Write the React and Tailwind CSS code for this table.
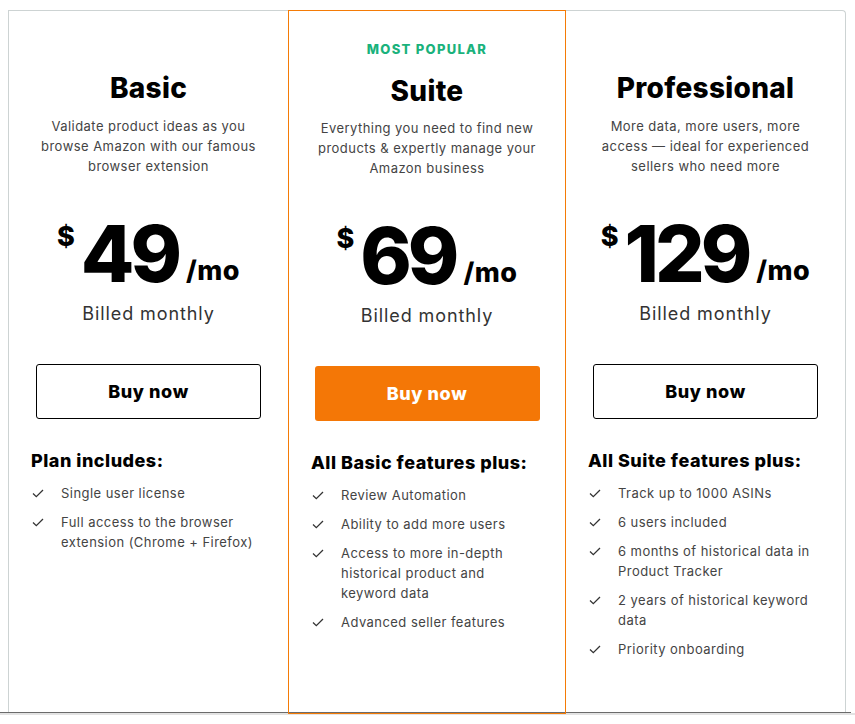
import React from 'react';

const plans = [
  {
    name: 'Basic',
    desc: ['Validate product ideas as you', 'browse Amazon with our famous', 'browser extension'],
    price: '49',
    heading: 'Plan includes:',
    features: ['Single user license', 'Full access to the browser extension (Chrome + Firefox)'],
  },
  {
    name: 'Suite',
    popular: true,
    desc: ['Everything you need to find new', 'products & expertly manage your', 'Amazon business'],
    price: '69',
    heading: 'All Basic features plus:',
    features: [
      'Review Automation',
      'Ability to add more users',
      'Access to more in-depth historical product and keyword data',
      'Advanced seller features',
    ],
  },
  {
    name: 'Professional',
    desc: ['More data, more users, more', 'access — ideal for experienced', 'sellers who need more'],
    price: '129',
    heading: 'All Suite features plus:',
    features: [
      'Track up to 1000 ASINs',
      '6 users included',
      '6 months of historical data in Product Tracker',
      '2 years of historical keyword data',
      'Priority onboarding',
    ],
  },
];

const Check = () => (
  <svg width="12" height="9" viewBox="0 0 12 9" className="mt-[6px] shrink-0" fill="none">
    <path d="M1 4.5 L4.3 7.6 L11 1" stroke="#333" strokeWidth="1.3" />
  </svg>
);

const PlanColumn = ({ plan }) => {
  const featured = plan.popular;
  return (
    <div
      className={
        featured
          ? 'w-[278px] h-[704px] border border-[#f47b06] flex flex-col items-center pt-[30px]'
          : 'w-[279px] h-[702px] flex flex-col items-center pt-[61px]'
      }
    >
      {featured && (
        <div className="text-[13px] leading-4 font-extrabold tracking-[1.3px] text-[#1ab27c] mb-[18px]">
          MOST POPULAR
        </div>
      )}
      <h2 className="text-[28px] leading-8 font-extrabold tracking-[0.3px] text-black">{plan.name}</h2>

      <p className={`text-[13px] leading-5 tracking-[0.45px] text-[#444] text-center ${featured ? 'mt-[11px]' : 'mt-[12px]'}`}>
        {plan.desc.map((line) => (
          <span key={line} className="block">{line}</span>
        ))}
      </p>

      <div className="flex mt-[38px] h-[80px]">
        <span className="text-[27px] leading-none font-extrabold text-black mt-[9px] mr-[6px]">$</span>
        <span className="text-[78px] leading-[80px] font-extrabold tracking-[-4px] text-black">{plan.price}</span>
        <span className="text-[27px] leading-none font-extrabold tracking-[0.5px] text-black self-end mb-[10px] ml-[8px]">/mo</span>
      </div>

      <div className="mt-[8px] text-[18px] leading-6 tracking-[0.9px] text-[#333]">Billed monthly</div>

      <button
        className={
          featured
            ? 'mt-[38px] w-[225px] h-[55px] rounded-[3px] bg-[#f47706] text-white text-[18px] tracking-[0.6px] font-extrabold'
            : 'mt-[38px] w-[225px] h-[55px] rounded-[3px] border border-black bg-white text-black text-[18px] tracking-[0.6px] font-extrabold'
        }
      >
        Buy now
      </button>

      <div className="self-stretch px-[22px] mt-[30px]">
        <div className="text-[18px] leading-6 font-extrabold tracking-[0.5px] text-black">{plan.heading}</div>
        <ul className="mt-[10px] flex flex-col gap-[9px]">
          {plan.features.map((f) => (
            <li key={f} className="flex text-[13px] leading-5 tracking-[0.45px] text-[#444]">
              <span className="w-[30px] pl-[1px] flex shrink-0">
                <Check />
              </span>
              <span className="max-w-[202px]">{f}</span>
            </li>
          ))}
        </ul>
      </div>
    </div>
  );
};

export default function App() {
  return (
    <div className="w-[855px] h-[724px] bg-white overflow-hidden" style={{ fontFamily: 'Inter, "Open Sans", sans-serif' }}>
      <div className="pt-[10px] pl-[8px] h-[712px]">
        <div className="flex w-[838px] border-t border-l border-r border-[#cdd3d3] rounded-tr-[4px] items-start">
          <PlanColumn plan={plans[0]} />
          <div className="-mt-px">
            <PlanColumn plan={plans[1]} />
          </div>
          <PlanColumn plan={plans[2]} />
        </div>
      </div>
      <div className="h-px bg-[#6b6b6b] w-[851px]" />
      <div className="h-[2px] bg-[#e3e3e3]" />
    </div>
  );
}
